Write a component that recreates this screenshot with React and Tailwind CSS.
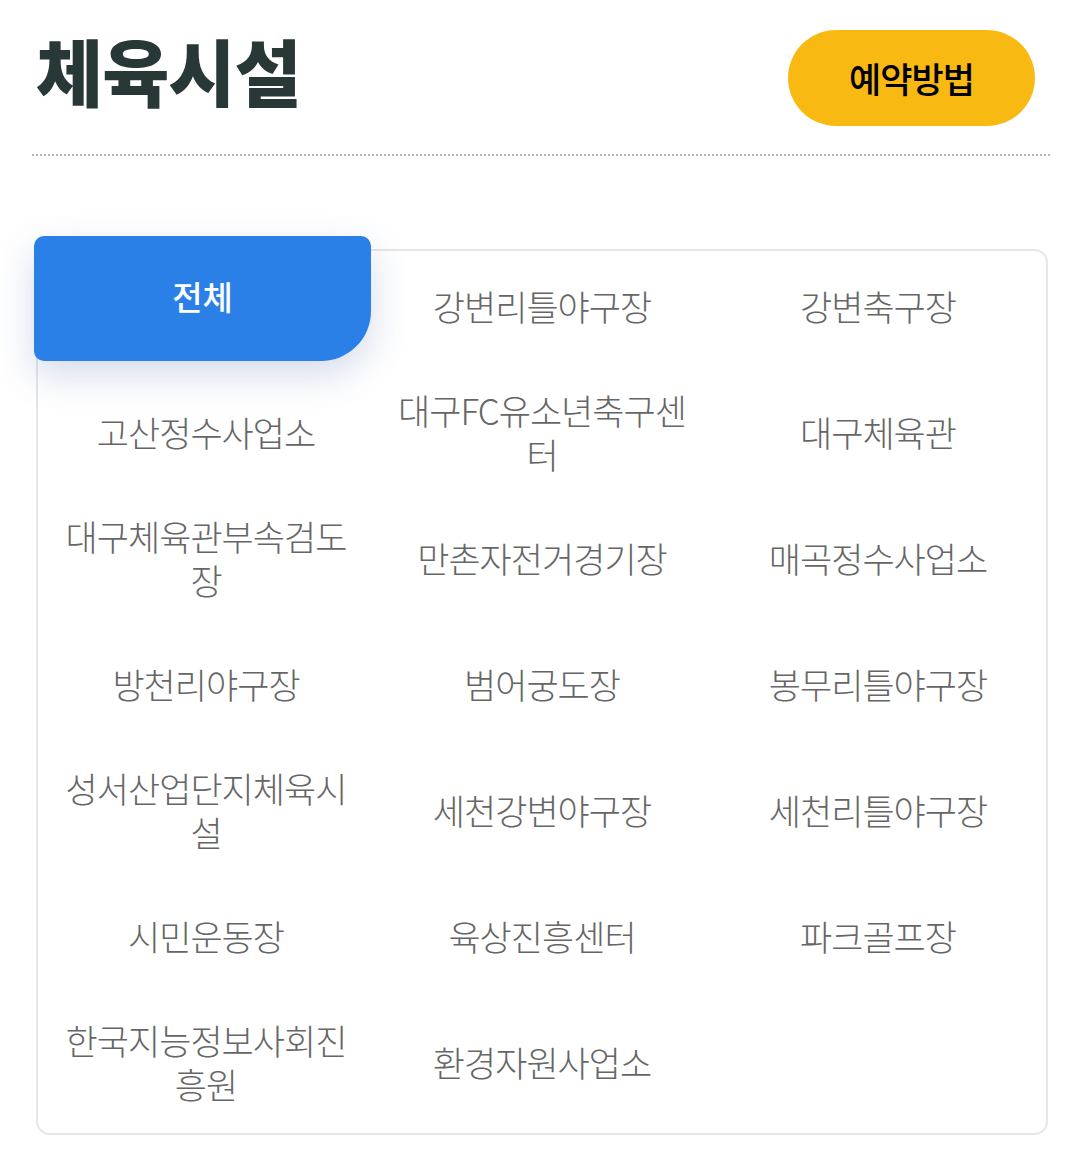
import React from 'react';

const facilities = [
  '강변리틀야구장',
  '강변축구장',
  '고산정수사업소',
  '대구FC유소년축구센터',
  '대구체육관',
  '대구체육관부속검도장',
  '만촌자전거경기장',
  '매곡정수사업소',
  '방천리야구장',
  '범어궁도장',
  '봉무리틀야구장',
  '성서산업단지체육시설',
  '세천강변야구장',
  '세천리틀야구장',
  '시민운동장',
  '육상진흥센터',
  '파크골프장',
  '한국지능정보사회진흥원',
  '환경자원사업소',
];

const font = { fontFamily: '"Noto Sans CJK KR", "Noto Sans", sans-serif' };

const App = () => {
  return (
    <div className="bg-white w-[1080px] min-h-[1150px] pt-[30px]" style={font}>
      <div className="flex items-center justify-between pl-[36px] pr-[45px]">
        <h1 className="text-[73px] font-black leading-none tracking-[-1px] text-[#283837] -mt-[18px]">체육시설</h1>
        <button className="w-[247px] h-[96px] rounded-full bg-[#f8b912] text-[35px] font-medium tracking-[-1px] text-black">
          예약방법
        </button>
      </div>
      <div className="mt-[28px] ml-[32px] mr-[30px] border-b-2 border-dotted border-[#b5b5b5]" />

      <div className="mt-[93px] ml-[36px] mr-[32px] border-2 border-[#e6e6e6] rounded-[14px]">
        <div className="grid grid-cols-3 auto-rows-[126px]">
          <div className="-mt-[15px] -ml-[4px] h-[125px] w-[337px] flex items-center justify-center pb-[4px] rounded-t-[10px] rounded-bl-[10px] rounded-br-[50px] bg-[#2b80e8] text-white text-[33px] font-medium shadow-[0_14px_36px_rgba(60,90,160,0.22)] relative z-10">
            전체
          </div>
          {facilities.map((name) => (
            <div key={name} className="flex items-center justify-center px-[20px] pb-[16px] text-center text-[35px] font-light leading-[44px] tracking-[-1px] text-[#666666] break-all">
              {name}
            </div>
          ))}
        </div>
      </div>
    </div>
  );
};

export default App;
